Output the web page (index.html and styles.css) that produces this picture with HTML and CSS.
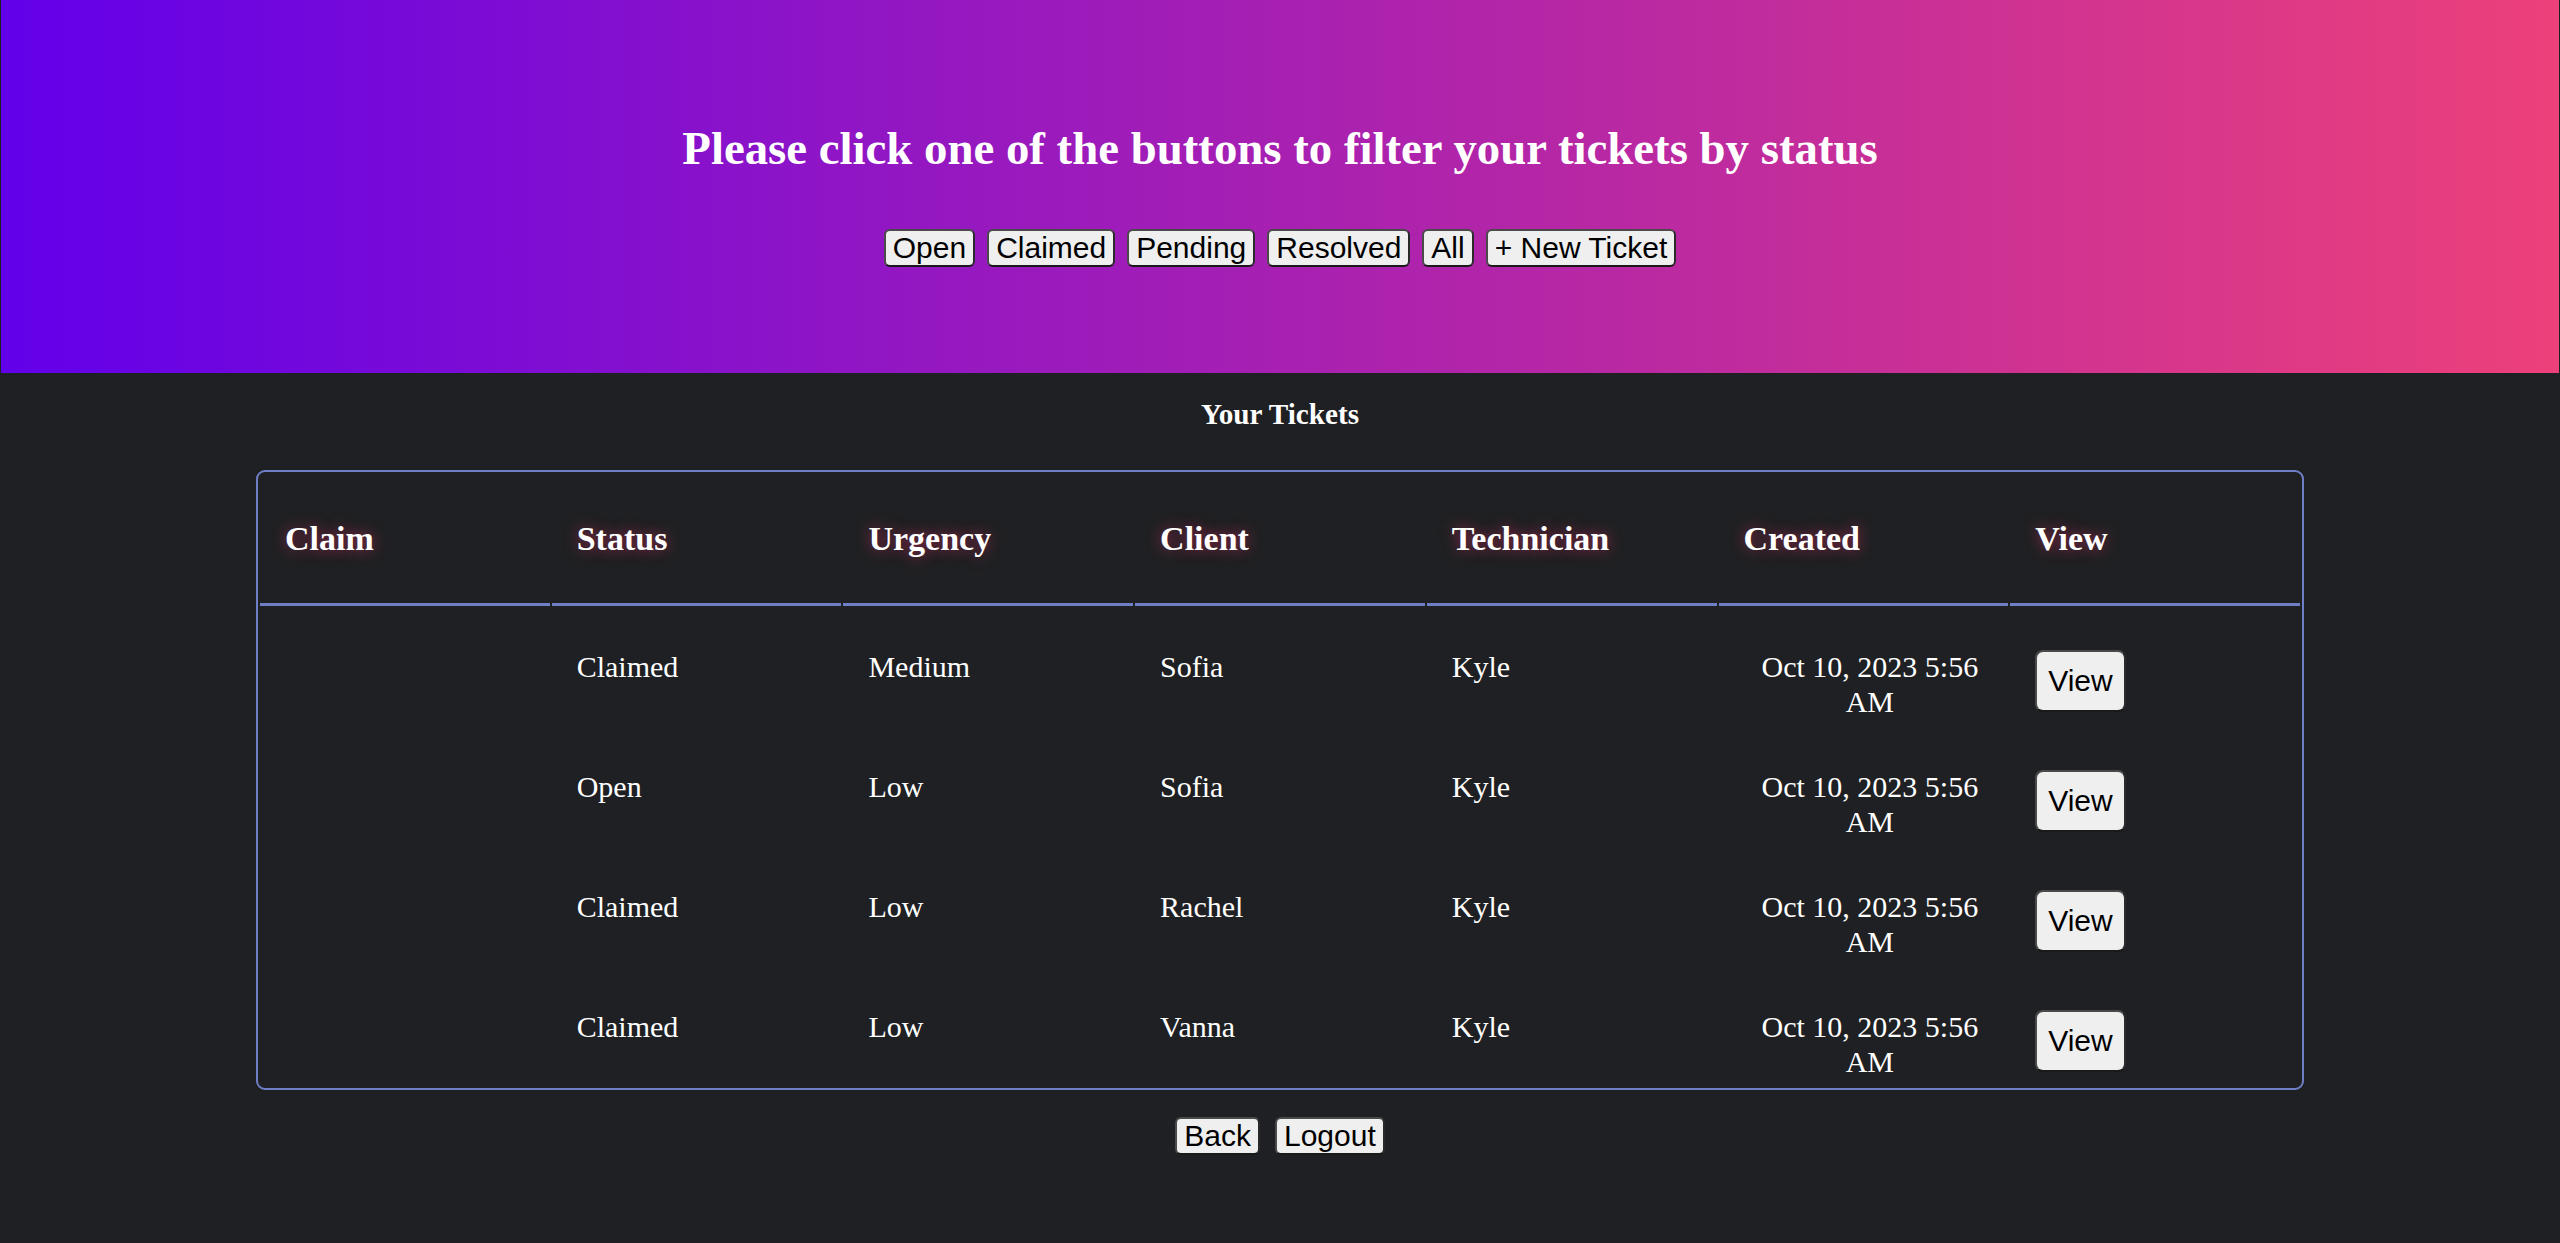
FILE: index.html
```html
<!DOCTYPE html>
<html lang="en">
<head>
<meta charset="utf-8">
<title>Your Tickets</title>
<link rel="stylesheet" href="styles.css">
</head>
<body>
<header class="hero">
  <h1 class="hero-title">Please click one of the buttons to filter your tickets by status</h1>
  <nav class="filters">
    <button class="btn">Open</button>
    <button class="btn">Claimed</button>
    <button class="btn">Pending</button>
    <button class="btn">Resolved</button>
    <button class="btn">All</button>
    <button class="btn">+ New Ticket</button>
  </nav>
</header>
<main class="content">
  <h3 class="section-title">Your Tickets</h3>
  <table class="tickets">
    <thead>
      <tr>
        <th>Claim</th><th>Status</th><th>Urgency</th><th>Client</th><th>Technician</th><th>Created</th><th>View</th>
      </tr>
    </thead>
    <tbody>
      <tr>
        <td></td><td>Claimed</td><td>Medium</td><td>Sofia</td><td>Kyle</td><td class="date">Oct 10, 2023 5:56 AM</td><td><button class="btn btn-view">View</button></td>
      </tr>
      <tr>
        <td></td><td>Open</td><td>Low</td><td>Sofia</td><td>Kyle</td><td class="date">Oct 10, 2023 5:56 AM</td><td><button class="btn btn-view">View</button></td>
      </tr>
      <tr>
        <td></td><td>Claimed</td><td>Low</td><td>Rachel</td><td>Kyle</td><td class="date">Oct 10, 2023 5:56 AM</td><td><button class="btn btn-view">View</button></td>
      </tr>
      <tr>
        <td></td><td>Claimed</td><td>Low</td><td>Vanna</td><td>Kyle</td><td class="date">Oct 10, 2023 5:56 AM</td><td><button class="btn btn-view">View</button></td>
      </tr>
    </tbody>
  </table>
  <div class="actions">
    <button class="btn">Back</button>
    <button class="btn">Logout</button>
  </div>
</main>
</body>
</html>
```
FILE: styles.css
```css
html {
  background: #1f2023;
}
body {
  margin: 0;
  background: #1f2023;
  color: #ffffff;
  font-family: "Liberation Serif", "Times New Roman", serif;
}
.hero {
  box-sizing: border-box;
  height: 373px;
  margin: 0 1px;
  padding-top: 121px;
  background: linear-gradient(90deg, #6200ea, #ec407a);
  display: flex;
  flex-direction: column;
  align-items: center;
}
.hero-title {
  margin: 0;
  font-size: 46.8px;
  line-height: 54px;
  font-weight: bold;
  color: #ffffff;
}
.filters {
  margin-top: 54px;
  display: flex;
  gap: 12px;
}
.btn {
  font-family: "Liberation Sans", Arial, sans-serif;
  font-size: 30px;
  line-height: normal;
  color: #000000;
  background: #efefef;
  border: 2px solid;
  border-color: #4a4a4a #2a2a2a #1a1a1a #4a4a4a;
  border-radius: 6px;
  padding: 0 7px;
  margin: 0;
}
.content {
  display: flex;
  flex-direction: column;
  align-items: center;
}
.section-title {
  margin: 25px 0 39px;
  font-size: 29.2px;
  line-height: 33px;
  font-weight: bold;
}
.tickets {
  width: 80%;
  table-layout: fixed;
  border: 2px solid #6f7fc6;
  border-radius: 9px;
  border-spacing: 2px;
}
.tickets th {
  text-align: left;
  font-size: 34px;
  line-height: 39px;
  font-weight: bold;
  padding: 45px 12px 45px 25px;
  border-bottom: 3px solid #6f7fc6;
  text-shadow: 0 0 14px rgba(240, 50, 110, 0.6);
}
.tickets td {
  vertical-align: top;
  text-align: left;
  font-size: 30px;
  line-height: 34.5px;
  padding: 42px 12px 7px 25px;
}
.tickets td.date {
  text-align: center;
}
.btn-view {
  padding: 12px 11px;
  border-radius: 8px;
  vertical-align: top;
}
.actions {
  margin-top: 27px;
  display: flex;
  gap: 15px;
}
```
